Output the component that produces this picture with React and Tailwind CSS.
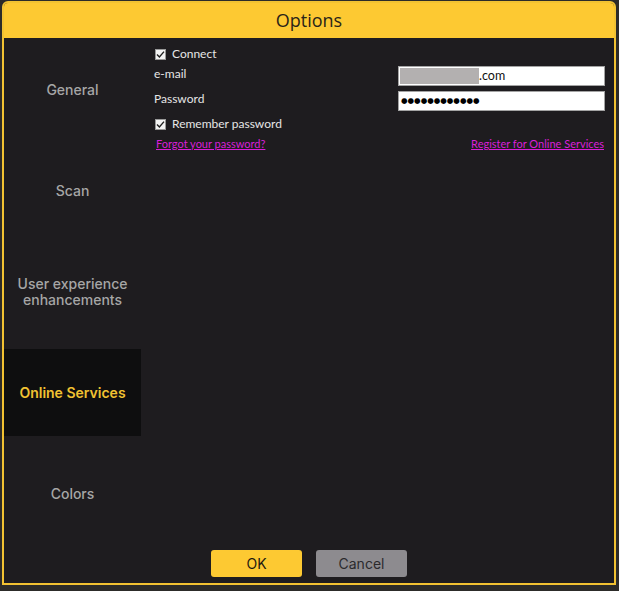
import React from "react";

function Check() {
  return (
    <span className="w-[11px] h-[11px] bg-[#f4f4f4] border border-[#9a9a9a] flex items-center justify-center shrink-0">
      <svg width="9" height="9" viewBox="0 0 9 9">
        <path d="M1 4.6 L3.4 7 L8 1.6" fill="none" stroke="#222" strokeWidth="1.4" />
      </svg>
    </span>
  );
}

const tabs = ["General", "Scan", "User experience enhancements", "Online Services", "Colors"];

export default function App() {
  return (
    <div className="w-[619px] h-[591px] bg-[#2c2b29] pt-[1px] pl-[2px] pr-[3px] pb-[6px] flex">
      <div className="flex-1 flex flex-col border-2 border-[#f2c232] rounded-t-[6px] overflow-hidden">
        <div className="h-[35px] bg-[#fdc932] flex items-center justify-center shrink-0">
          <span className="text-[18px] text-[#2a2418]" style={{ fontFamily: '"Open Sans", sans-serif' }}>Options</span>
        </div>
        <div className="flex-1 bg-[#1e1c1f] flex flex-col">
          <div className="flex-1 flex">
            <div className="w-[137px] pt-[8px] flex flex-col gap-[14px]" style={{ fontFamily: 'Inter, sans-serif' }}>
              {tabs.map((t) => {
                const sel = t === "Online Services";
                return (
                  <div
                    key={t}
                    className={
                      "h-[87px] flex items-center justify-center text-center text-[14px] leading-[16px] px-2 " +
                      (sel ? "bg-[#0e0e0f] text-[#f1c232] font-semibold" : "text-[#a6a6a6] font-medium")
                    }
                  >
                    {t}
                  </div>
                );
              })}
            </div>
            <div className="flex-1 pt-[9px] pl-[14px] pr-[9px] text-[12px] text-[#e6e6e6]" style={{ fontFamily: 'Lato, sans-serif' }}>
              <div className="h-[14px] flex items-center gap-[6px]">
                <Check />
                <span>Connect</span>
              </div>
              <div className="mt-[5px] flex justify-between items-start">
                <span className="leading-[14px] -ml-[1px] mt-[1px]">e-mail</span>
                <div className="w-[207px] h-[20px] bg-white border border-[#a4a4a4] flex items-center pl-[1px]">
                  <span className="w-[79px] h-[16px] bg-[#b3b0b0]"></span>
                  <span className="text-[12.5px] text-[#111] leading-[14px]">.com</span>
                </div>
              </div>
              <div className="mt-[5px] flex justify-between items-start">
                <span className="leading-[14px] -ml-[1px] mt-[1px]">Password</span>
                <div className="w-[207px] h-[20px] bg-white border border-[#a4a4a4] flex items-center pl-[2px]">
                  <span className="text-[7.5px] text-black leading-[10px]" style={{ fontFamily: '"DejaVu Sans", sans-serif' }}>●●●●●●●●●●●●</span>
                </div>
              </div>
              <div className="mt-[6px] h-[14px] flex items-center gap-[6px]">
                <Check />
                <span>Remember password</span>
              </div>
              <div className="mt-[6px] h-[14px] flex items-center justify-between text-[11px] text-[#d91fd9] underline pl-[1px] pr-[1px]">
                <span>Forgot your password?</span>
                <span>Register for Online Services</span>
              </div>
            </div>
          </div>
          <div className="flex justify-center gap-[14px] pb-[6px]" style={{ fontFamily: 'Inter, sans-serif' }}>
            <div className="w-[91px] h-[27px] rounded-[3px] bg-[#fdc932] flex items-center justify-center text-[14px] text-[#1f1a10]">OK</div>
            <div className="w-[91px] h-[27px] rounded-[3px] bg-[#8d8b8f] flex items-center justify-center text-[14px] text-[#2b2a2d]">Cancel</div>
          </div>
        </div>
      </div>
    </div>
  );
}
